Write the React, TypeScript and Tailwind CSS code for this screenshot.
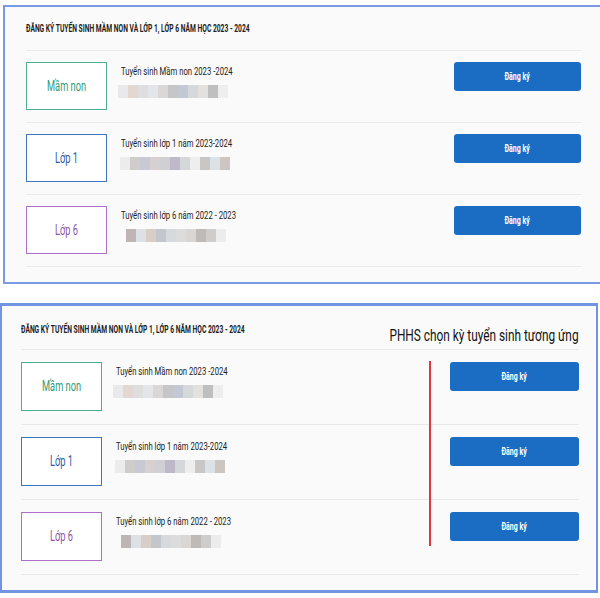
import React from 'react';

const roboto = { fontFamily: 'Roboto, "Liberation Sans", Arial, sans-serif' };

// the screenshot uses a condensed face; squeeze Roboto horizontally
function Cond({ children, className }: { children: React.ReactNode; className: string }) {
  return <span className={`inline-block whitespace-nowrap ${className}`}>{children}</span>;
}

type Row = {
  label: string;
  title: string;
  box: string;
  text: string;
  blur: string[];
  blurMl: string;
};

const rows: Row[] = [
  {
    label: 'Mầm non',
    title: 'Tuyển sinh Mầm non 2023 -2024',
    box: 'border-[#4fae90]',
    text: 'text-[#2f9a74]',
    blur: ['#e9e9eb', '#e2d8d1', '#dedede', '#e3e5e9', '#dad8d6', '#c6c6c8', '#c4c8d4', '#d6d9da', '#e2e1de', '#bfbfbf', '#eeeeee'],
    blurMl: 'ml-[-3px]',
  },
  {
    label: 'Lớp 1',
    title: 'Tuyển sinh lớp 1 năm 2023-2024',
    box: 'border-[#3f76ba]',
    text: 'text-[#2c5ba3]',
    blur: ['#ececec', '#cfcccc', '#c9c9d3', '#d6d0d0', '#d0d0d4', '#bdb9c9', '#d5d7da', '#eeeeee', '#c9c7c5', '#dce1e6', '#cbc6c2'],
    blurMl: 'ml-[-1px]',
  },
  {
    label: 'Lớp 6',
    title: 'Tuyển sinh lớp 6 năm 2022 - 2023',
    box: 'border-[#b06fc8]',
    text: 'text-[#8d56a8]',
    blur: ['#bdb6b4', '#dde1e6', '#d9cdc8', '#c3c7cb', '#d6dadc', '#dcdcdc', '#d9d6d4', '#bdbab8', '#cfcdcb', '#ececec'],
    blurMl: 'ml-[5px]',
  },
];

function RegRow({ row, big }: { row: Row; big: boolean }) {
  return (
    <div className={big ? 'flex pt-[12px] pb-[13px] border-b border-[#e9e9e9]' : 'flex pt-[11px] pb-[12px] border-b border-[#e9e9e9]'}>
      <div
        className={`w-[81px] shrink-0 ${big ? 'h-[49px]' : 'h-[48px]'} border ${row.box} bg-white flex items-center justify-center text-[14px] ${row.text}`}
      >
        <Cond className="origin-center scale-x-[0.66]">{row.label}</Cond>
      </div>
      <div className="ml-[14px] pt-[3px] w-[150px] flex flex-col">
        <div className="text-[11px] leading-[14px] text-[#222]">
          <Cond className="origin-left scale-x-[0.7]">{row.title}</Cond>
        </div>
        <div className={`mt-[6px] h-[13px] flex ${row.blurMl}`}>
          {row.blur.map((c, i) => (
            <div key={i} className="w-[10px] h-full" style={{ backgroundColor: c }} />
          ))}
        </div>
      </div>
      <div className="flex-1" />
      <button
        className={`${big ? 'w-[129px]' : 'w-[127px]'} h-[29px] rounded-[3px] bg-[#1b6dc3] text-white text-[10px] font-bold flex items-center justify-center`}
      >
        <Cond className="origin-center scale-x-[0.7]">Đăng ký</Cond>
      </button>
    </div>
  );
}

const heading = 'ĐĂNG KÝ TUYỂN SINH MẦM NON VÀ LỚP 1, LỚP 6 NĂM HỌC 2023 - 2024';

export default function App() {
  return (
    <div className="w-[600px] h-[598px] bg-white overflow-hidden" style={roboto}>
      {/* panel 1 */}
      <div className="mt-[5px] ml-[3px] w-[597px] border-t-2 border-l-2 border-b-2 border-[#7a9ae6] bg-[#fafafa] pl-[21px] pr-[19px] pb-[15px]">
        <div className="h-[43px] flex items-center text-[10px] font-bold text-[#222]">
          <Cond className="origin-left scale-x-[0.67]">{heading}</Cond>
        </div>
        <div className="border-t border-[#e9e9e9]">
          {rows.map((r) => (
            <RegRow key={r.label} row={r} big={false} />
          ))}
        </div>
      </div>

      {/* panel 2 */}
      <div className="relative mt-[19px] w-[598px] border-t-[3px] border-r-2 border-b-[3px] border-l-2 border-[#7294e2] bg-[#fafafa] pl-[19px] pr-[17px] pb-[15px]">
        <div className="h-[43px] flex items-start">
          <div className="w-[240px] shrink-0 pt-[18px] text-[10px] leading-[12px] font-bold text-[#222]">
            <Cond className="origin-left scale-x-[0.67]">{heading}</Cond>
          </div>
          <div className="flex-1 flex justify-end pt-[20px] text-[16px] leading-[20px] text-[#111]">
            <Cond className="origin-right scale-x-[0.74]">PHHS chọn kỳ tuyển sinh tương ứng</Cond>
          </div>
        </div>
        <div className="border-t border-[#e9e9e9]">
          {rows.map((r) => (
            <RegRow key={r.label} row={r} big={true} />
          ))}
        </div>
        <div className="absolute left-[427px] top-[55px] w-[2px] h-[185px] bg-[#e0383a]" />
      </div>
    </div>
  );
}
